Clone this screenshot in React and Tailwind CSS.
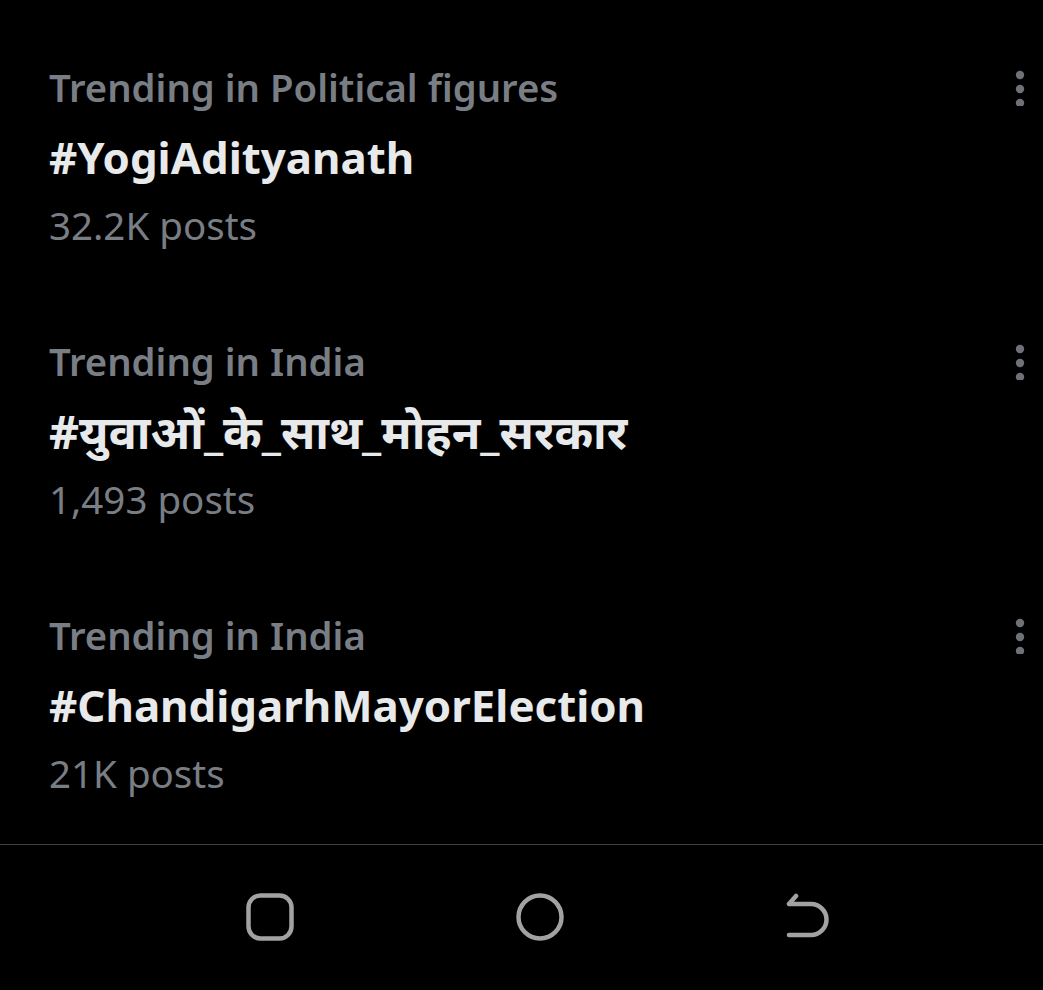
import React from 'react';

const trends = [
  { label: 'Trending in Political figures', tag: '#YogiAdityanath', posts: '32.2K posts' },
  { label: 'Trending in India', tag: '#युवाओं_के_साथ_मोहन_सरकार', posts: '1,493 posts', hindi: true },
  { label: 'Trending in India', tag: '#ChandigarhMayorElection', posts: '21K posts' },
];

const MoreDots = () => (
  <svg width="12" height="36" viewBox="0 0 12 36" className="text-[#6e7276]">
    <circle cx="6" cy="5" r="4.2" fill="currentColor" />
    <circle cx="6" cy="19" r="4.2" fill="currentColor" />
    <circle cx="6" cy="33" r="4.2" fill="currentColor" />
  </svg>
);

const TrendRow = ({ item }) => (
  <div className="flex justify-between pl-[49px] pr-[17px]">
    <div className="flex flex-col">
      <div className="font-['Noto_Sans',sans-serif] font-semibold text-[38.3px] leading-[70px] text-[#797e84]">
        {item.label}
      </div>
      <div
        className={
          item.hindi
            ? "font-['Noto_Sans',sans-serif] font-bold text-[46.6px] leading-[70px] text-[#e7e9ea]"
            : "font-['Noto_Sans',sans-serif] font-bold text-[43.8px] leading-[70px] text-[#e7e9ea]"
        }
      >
        {item.tag}
      </div>
      <div className="font-['Noto_Sans',sans-serif] text-[38.5px] leading-[66px] text-[#797e84]">
        {item.posts}
      </div>
    </div>
    <div className="pt-[18px]">
      <MoreDots />
    </div>
  </div>
);

const NavBar = () => (
  <div className="border-t border-[#3f3f3f] h-[145px] flex items-center pl-[246px] gap-[222px] text-[#a2a2a2]">
    <svg width="48" height="48" viewBox="0 0 48 48">
      <rect x="2.5" y="2.5" width="43" height="43" rx="12" fill="none" stroke="currentColor" strokeWidth="4.5" />
    </svg>
    <svg width="48" height="48" viewBox="0 0 48 48">
      <circle cx="24" cy="24" r="21.5" fill="none" stroke="currentColor" strokeWidth="4.5" />
    </svg>
    <svg width="48" height="48" viewBox="0 0 48 48">
      <path
        d="M10 3 L3 11 L25 11 A15.5 15.5 0 0 1 25 42 L3 42"
        fill="none"
        stroke="currentColor"
        strokeWidth="4.5"
        strokeLinecap="round"
        strokeLinejoin="round"
      />
    </svg>
  </div>
);

const App = () => {
  return (
    <div className="w-[1043px] h-[990px] bg-black flex flex-col overflow-hidden">
      <div className="pt-[52px] flex flex-col gap-[68px] pb-[38px]">
        {trends.map((t, i) => (
          <TrendRow key={i} item={t} />
        ))}
      </div>
      <NavBar />
    </div>
  );
};

export default App;
